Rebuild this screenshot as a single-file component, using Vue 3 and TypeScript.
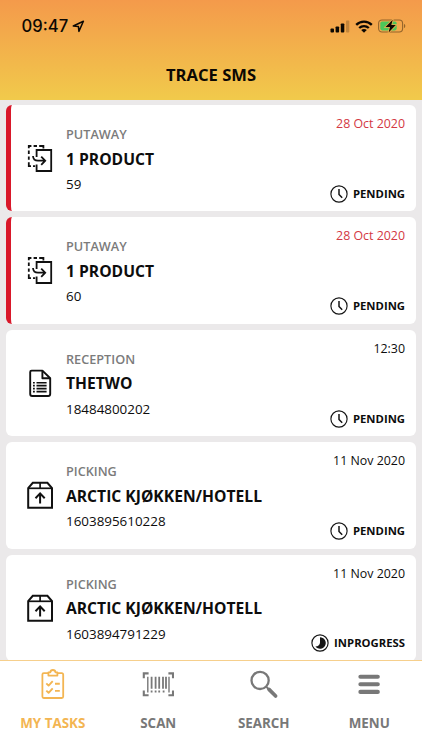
<script setup lang="ts">
type TaskKind = 'putaway' | 'reception' | 'picking'
type TaskStatus = 'PENDING' | 'INPROGRESS'

interface Task {
  kind: TaskKind
  title: string
  code: string
  date: string
  status: TaskStatus
  late: boolean
}

const tasks: Task[] = [
  { kind: 'putaway', title: '1 PRODUCT', code: '59', date: '28 Oct 2020', status: 'PENDING', late: true },
  { kind: 'putaway', title: '1 PRODUCT', code: '60', date: '28 Oct 2020', status: 'PENDING', late: true },
  { kind: 'reception', title: 'THETWO', code: '18484800202', date: '12:30', status: 'PENDING', late: false },
  { kind: 'picking', title: 'ARCTIC KJØKKEN/HOTELL', code: '1603895610228', date: '11 Nov 2020', status: 'PENDING', late: false },
  { kind: 'picking', title: 'ARCTIC KJØKKEN/HOTELL', code: '1603894791229', date: '11 Nov 2020', status: 'INPROGRESS', late: false },
]
</script>

<template>
  <div class="screen">
    <header class="header">
      <div class="status-bar">
        <div class="clock">
          <span>09:47</span>
          <svg class="location" width="13" height="13" viewBox="0 0 13 13">
            <path d="M1.3 6 L11.4 1.3 L6.9 11.4 L6.4 6.4 Z" fill="none" stroke="#0c0803" stroke-width="1.5" stroke-linejoin="round" />
          </svg>
        </div>
        <div class="indicators">
          <svg width="20" height="13" viewBox="0 0 20 13">
            <rect x="0.5" y="8.6" width="3.5" height="3.9" rx="0.9" />
            <rect x="5.6" y="6.4" width="3.5" height="6.1" rx="0.9" />
            <rect x="10.8" y="3.4" width="3.5" height="9.1" rx="0.9" />
            <rect x="16" y="0.6" width="3.3" height="11.9" rx="0.9" fill="#a97332" opacity="0.65" />
          </svg>
          <svg class="wifi" width="18" height="13" viewBox="0 0 18 13">
            <g fill="none" stroke="#0c0803" stroke-width="2.3">
              <path d="M1.2 4.9 C5.5 0.6 12.5 0.6 16.8 4.9" />
              <path d="M4.2 8 C6.9 5.4 11.1 5.4 13.8 8" />
            </g>
            <path d="M9 12.8 L6.2 10 C7.8 8.6 10.2 8.6 11.8 10 Z" />
          </svg>
          <svg class="battery" width="28" height="14" viewBox="0 0 28 14">
            <rect x="0.6" y="1" width="24" height="12" rx="3.4" fill="none" stroke="#94642b" stroke-width="1.1" />
            <path d="M26 5 C27.7 5.5 27.7 8.5 26 9 Z" fill="#94642b" />
            <rect x="2.3" y="2.6" width="16.4" height="8.8" rx="1.8" fill="#4cc75a" />
            <path d="M14.7 0.7 L7.5 8 H12 L10.6 13.4 L17.8 6.1 H13.3 Z" stroke="#f0ad4b" stroke-width="1.6" paint-order="stroke" />
          </svg>
        </div>
      </div>
      <h1 class="title">TRACE SMS</h1>
    </header>

    <main class="list">
      <article v-for="(task, i) in tasks" :key="i" class="card" :class="{ late: task.late }">
        <div class="icon-box">
          <svg v-if="task.kind === 'putaway'" width="28" height="30" viewBox="0 0 28 30" fill="none" stroke="#111" stroke-width="1.8">
            <path d="M2.8 5.2 V3 H5.4 M7.6 3 H11 M13.2 3 H17.4 V5.4 M2.8 7.6 V11 M2.8 13.4 V16.8 M2.8 19.2 V23.2 H5 M7 23.2 H9.2" />
            <path d="M10.6 14 V7 H25.2 V28 H10.6 V21.4" />
            <path d="M7 13 C7.2 16.4 9 17.7 12 17.7 H18.6 M15.2 13.6 L19.2 17.7 L15.2 21.8" />
          </svg>
          <svg v-else-if="task.kind === 'reception'" width="28" height="30" viewBox="0 0 28 30" fill="none" stroke="#111" stroke-width="1.9" stroke-linejoin="round">
            <path d="M5.6 2.6 H16.4 L24.2 10.2 V26 Q24.2 28 22.2 28 H6.2 Q4.2 28 4.2 26 V4 Q4.2 2.6 5.6 2.6 Z" />
            <path d="M16.4 2.8 V10.2 H24.2" />
            <path d="M10.5 14.8 H20.6 M10.5 17.6 H20.6 M10.5 20.6 H20.6 M10.5 23.6 H20.6" stroke-width="1.6" />
            <path d="M7 14.8 H8.8 M7 17.6 H8.8 M7 20.6 H8.8 M7 23.6 H8.8" stroke-width="1.6" />
          </svg>
          <svg v-else width="28" height="30" viewBox="0 0 28 30" fill="none" stroke="#111" stroke-width="2">
            <path d="M2.2 8.2 L6.8 2.8 H21.4 L26 8.2 V27.8 H2.2 Z" />
            <path d="M2.2 8.3 H26" stroke-width="1.7" />
            <path d="M14.1 3 V8" stroke-width="1.7" />
            <path d="M14.1 23.4 V14 M9.5 18.2 L14.1 13.4 L18.7 18.2" />
          </svg>
        </div>
        <div class="info">
          <div class="kind">{{ task.kind.toUpperCase() }}</div>
          <div class="name">{{ task.title }}</div>
          <div class="code">{{ task.code }}</div>
        </div>
        <div class="side">
          <div class="date">{{ task.date }}</div>
          <div class="state">
            <svg width="18" height="18" viewBox="0 0 18 18" fill="none" stroke="#151515">
              <circle cx="9" cy="9" r="8.1" stroke-width="1.15" />
              <path v-if="task.status === 'PENDING'" d="M9 4 V9.4 L12.2 12.8" stroke-width="1.5" />
              <path v-else d="M9 3.2 A5.8 5.8 0 1 1 4.4 12.6 C7.4 12.4 9 11 9 8.6 Z" fill="#151515" stroke="none" />
            </svg>
            <span>{{ task.status }}</span>
          </div>
        </div>
      </article>
    </main>

    <nav class="tabs">
      <a class="tab active">
        <svg width="32" height="32" viewBox="0 0 32 32" fill="none" stroke="#f3b552" stroke-width="1.8" stroke-linejoin="round">
          <path d="M11.4 5.2 H6.8 Q5.4 5.2 5.4 6.6 V28.6 Q5.4 30 6.8 30 H24.8 Q26.2 30 26.2 28.6 V6.6 Q26.2 5.2 24.8 5.2 H20.4" />
          <path d="M11.4 7.6 V4.4 H13.3 C13.6 1.2 18.2 1.2 18.5 4.4 H20.4 V7.6 Z" />
          <path d="M9.3 15.4 L11.6 17.6 L15.7 13.2 M9.3 22.6 L11.6 24.8 L15.7 20.4 M18 15.7 H22.8 M18 22.9 H22.8" stroke-width="1.9" />
        </svg>
        <span>MY TASKS</span>
      </a>
      <a class="tab">
        <svg width="32" height="32" viewBox="0 0 32 32" fill="none" stroke="#787878">
          <path d="M6.6 5.4 H1.8 V10.2 M26.4 5.4 H31 V10.2 M6.6 27.3 H1.8 V22.4 M26.4 27.3 H31 V22.4" stroke-width="2.1" />
          <path d="M5.8 8.8 V24.6 M27 8.8 V24.6" stroke-width="1.4" />
          <path d="M9.6 8.8 V20.8 M13.6 8.8 V20.8 M17.2 8.8 V20.8 M21 8.8 V20.8 M24 8.8 V20.8" stroke-width="1.8" />
          <path d="M9.6 22.6 V24.6 M13.6 22.6 V24.6 M17.2 22.6 V24.6 M21.6 22.6 V24.6" stroke-width="1.8" />
        </svg>
        <span>SCAN</span>
      </a>
      <a class="tab">
        <svg width="32" height="32" viewBox="0 0 32 32" fill="none" stroke="#787878">
          <circle cx="12.1" cy="12.4" r="8.6" stroke-width="2.3" />
          <path d="M18.4 18.9 L20.6 21.1" stroke-width="2" />
          <path d="M21 21.4 L27.6 28" stroke-width="3.7" stroke-linecap="round" />
        </svg>
        <span>SEARCH</span>
      </a>
      <a class="tab">
        <svg width="32" height="32" viewBox="0 0 32 32" fill="none" stroke="#787878" stroke-width="4.1" stroke-linecap="round">
          <path d="M7.4 8.8 H24.8 M7.4 16.3 H24.8 M7.4 23.9 H24.8" />
        </svg>
        <span>MENU</span>
      </a>
    </nav>
  </div>
</template>

<style>
body {
  margin: 0;
  overflow: hidden;
}
</style>

<style scoped>
.screen {
  display: flex;
  flex-direction: column;
  width: 422px;
  height: 750px;
  overflow: hidden;
  background: #ebe9ea;
  font-family: "Open Sans", "Noto Sans", sans-serif;
  color: #0d0d0d;
}

.header {
  flex: none;
  box-sizing: border-box;
  height: 100px;
  background: linear-gradient(#f49a4b, #f1ca4b);
  color: #0c0803;
}

.status-bar {
  display: flex;
  justify-content: space-between;
  box-sizing: border-box;
  height: 52px;
  padding: 16px 16px 0 21.6px;
}

.clock {
  display: flex;
  align-items: center;
  gap: 3.5px;
  height: 20px;
  font-family: Inter, sans-serif;
  font-size: 16.6px;
  font-weight: 500;
}

.indicators {
  display: flex;
  align-items: center;
  height: 20px;
  fill: #0c0803;
}

.wifi {
  margin-left: 5px;
}

.battery {
  margin-left: 5px;
}

.title {
  margin: 13px 0 0;
  font-size: 16.6px;
  font-weight: 700;
  line-height: 20px;
  text-align: center;
}

.list {
  display: flex;
  flex: 1;
  flex-direction: column;
  gap: 6px;
  min-height: 0;
  overflow: hidden;
  padding: 5px 6px 0;
}

.card {
  display: flex;
  flex: none;
  box-sizing: border-box;
  height: 106.4px;
  padding: 0 11px 0 20px;
  border-radius: 6px;
  background: #fff;
}

.card.late {
  padding-left: 15px;
  border-left: 5px solid #d9182a;
}

.icon-box {
  width: 40px;
  padding-top: 38px;
}

.icon-box svg {
  display: block;
}

.info {
  flex: 1;
  padding-top: 20px;
  white-space: nowrap;
}

.kind {
  color: #7b7b7b;
  font-size: 12.7px;
  font-weight: 600;
  line-height: 19px;
}

.name {
  margin-top: 2.6px;
  font-size: 15.65px;
  font-weight: 700;
  line-height: 24px;
}

.code {
  margin-top: 2.4px;
  font-size: 13.4px;
  line-height: 22px;
}

.side {
  display: flex;
  flex-direction: column;
  align-items: flex-end;
  justify-content: space-between;
  box-sizing: border-box;
  padding: 9px 0 8.5px;
  white-space: nowrap;
}

.date {
  font-size: 12.4px;
  line-height: 20px;
}

.late .date {
  color: #d33843;
}

.state {
  display: flex;
  align-items: center;
  gap: 5px;
  font-size: 11.3px;
  font-weight: 700;
  line-height: 18px;
}

.tabs {
  display: flex;
  flex: none;
  box-sizing: border-box;
  height: 90px;
  border-top: 1px solid #f6cf8c;
  background: #fff;
}

.tab {
  display: flex;
  flex: 1 1 0;
  flex-direction: column;
  align-items: center;
  padding-top: 7px;
  color: #787878;
  font-size: 13.4px;
  font-weight: 700;
  line-height: 20px;
}

.tab span {
  margin-top: 13px;
}

.tab.active {
  color: #f3b552;
}
</style>
